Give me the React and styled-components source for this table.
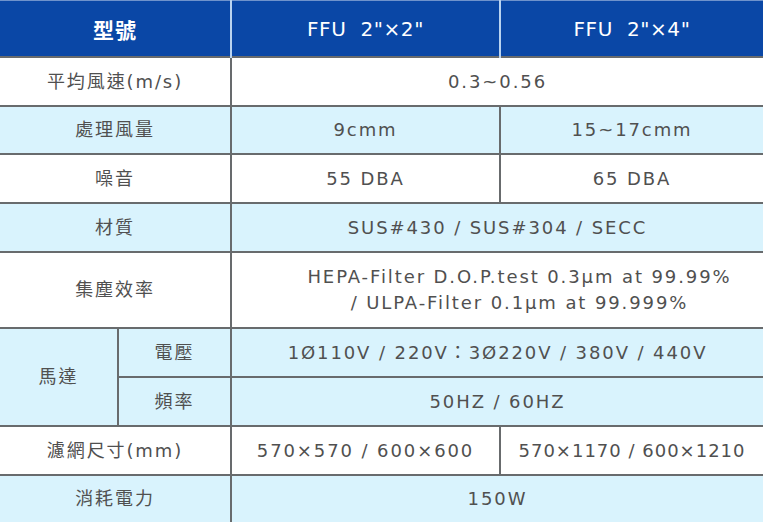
import React from "react";
import styled, { createGlobalStyle } from "styled-components";

const Global = createGlobalStyle`
  html, body { margin: 0; padding: 0; background: #ffffff; }
  body { font-family: "DejaVu Sans", "Noto Sans CJK TC", sans-serif; }
`;

const Table = styled.table`
  width: 763px;
  table-layout: fixed;
  border-collapse: collapse;
  font-family: "DejaVu Sans", "Noto Sans CJK TC", sans-serif;
  font-size: 18px;
  color: #505050;
  letter-spacing: 1.9px;
`;

const HeadCell = styled.th`
  background: #0a47a6;
  color: #ffffff;
  font-weight: ${(p) => (p.$cjk ? 700 : 400)};
  font-size: ${(p) => (p.$cjk ? "21px" : "20px")};
  height: 55px;
  padding: 0;
  text-align: center;
  white-space: pre;
  letter-spacing: ${(p) => (p.$cjk ? "1px" : "0.6px")};
  border-left: 2px solid #b9d3f0;
  border-top: 1px solid #6f93cc;
  &:first-child { border-left: none; }
`;

const Row = styled.tr`
  background: ${(p) => (p.$tint ? "#d9f3fd" : "#ffffff")};
  height: ${(p) => p.$h}px;
`;

const Cell = styled.td`
  padding: 0 0 0 ${(p) => p.$indent || 0}px;
  text-align: center;
  vertical-align: middle;
  border: 2px solid #686b6d;
  line-height: 26px;
  white-space: nowrap;
  letter-spacing: ${(p) => (p.$tight ? "1px" : "inherit")};
  &:first-child { border-left: none; }
  &:last-child { border-right: none; }
`;

const rows = [
  { label: "平均風速(m/s)", values: ["0.3~0.56"], h: 49 },
  { label: "處理風量", values: ["9cmm", "15~17cmm"], tint: true, h: 48 },
  { label: "噪音", values: ["55 DBA", "65 DBA"], h: 49 },
  { label: "材質", values: ["SUS#430 / SUS#304 / SECC"], tint: true, h: 49 },
];

function Values({ values }) {
  if (values.length === 1) return <Cell colSpan={2}>{values[0]}</Cell>;
  return values.map((v) => <Cell key={v}>{v}</Cell>);
}

export default function App() {
  return (
    <>
      <Global />
      <Table>
        <colgroup>
          <col style={{ width: 118 }} />
          <col style={{ width: 113 }} />
          <col style={{ width: 269 }} />
          <col style={{ width: 263 }} />
        </colgroup>
        <thead>
          <tr>
            <HeadCell colSpan={2} $cjk>型號</HeadCell>
            <HeadCell>{'FFU  2"×2"'}</HeadCell>
            <HeadCell>{'FFU  2"×4"'}</HeadCell>
          </tr>
        </thead>
        <tbody>
          {rows.map((r) => (
            <Row key={r.label} $tint={r.tint} $h={r.h}>
              <Cell colSpan={2}>{r.label}</Cell>
              <Values values={r.values} />
            </Row>
          ))}
          <Row $h={76}>
            <Cell colSpan={2}>集塵效率</Cell>
            <Cell colSpan={2} $indent={44}>
              HEPA-Filter D.O.P.test 0.3μm at 99.99%
              <br />/ ULPA-Filter 0.1μm at 99.999%
            </Cell>
          </Row>
          <Row $tint $h={49}>
            <Cell rowSpan={2}>馬達</Cell>
            <Cell>電壓</Cell>
            <Cell colSpan={2}>1Ø110V / 220V：3Ø220V / 380V / 440V</Cell>
          </Row>
          <Row $tint $h={49}>
            <Cell>頻率</Cell>
            <Cell colSpan={2}>50HZ / 60HZ</Cell>
          </Row>
          <Row $h={49}>
            <Cell colSpan={2}>濾網尺寸(mm)</Cell>
            <Cell>570×570 / 600×600</Cell>
            <Cell $tight>570×1170 / 600×1210</Cell>
          </Row>
          <Row $tint $h={48}>
            <Cell colSpan={2}>消耗電力</Cell>
            <Cell colSpan={2}>150W</Cell>
          </Row>
        </tbody>
      </Table>
    </>
  );
}
